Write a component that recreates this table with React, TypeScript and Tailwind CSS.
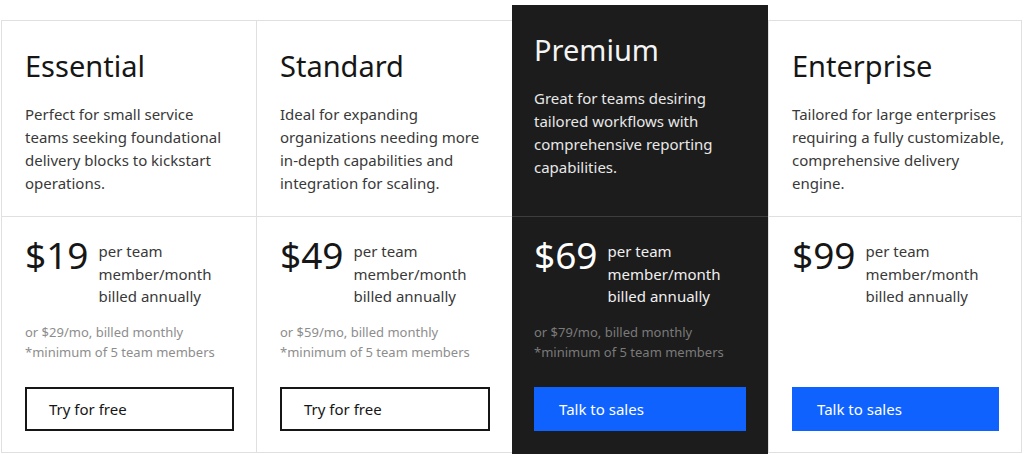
const plans = [
  {
    name: "Essential",
    desc: "Perfect for small service teams seeking foundational delivery blocks to kickstart operations.",
    price: "$19",
    monthly: "or $29/mo, billed monthly",
    cta: "Try for free",
    dark: false,
    width: "w-[255px]",
    descPad: "pr-[20px]",
  },
  {
    name: "Standard",
    desc: "Ideal for expanding organizations needing more in-depth capabilities and integration for scaling.",
    price: "$49",
    monthly: "or $59/mo, billed monthly",
    cta: "Try for free",
    dark: false,
    width: "w-[256px]",
    descPad: "pr-[20px]",
  },
  {
    name: "Premium",
    desc: "Great for teams desiring tailored workflows with comprehensive reporting capabilities.",
    price: "$69",
    monthly: "or $79/mo, billed monthly",
    cta: "Talk to sales",
    dark: true,
    width: "w-[256px]",
    descPad: "pr-[20px]",
  },
  {
    name: "Enterprise",
    desc: "Tailored for large enterprises requiring a fully customizable, comprehensive delivery engine.",
    price: "$99",
    monthly: null,
    cta: "Talk to sales",
    dark: false,
    width: "w-[254px] border-r",
    descPad: "pr-[8px]",
  },
]

function PlanColumn({ plan }: { plan: (typeof plans)[number] }) {
  const dark = plan.dark
  return (
    <div
      className={
        dark
          ? `${plan.width} -mt-[15px] bg-[#1c1c1c] flex flex-col`
          : `${plan.width} border-l border-t border-b border-[#e0e0e0] bg-white flex flex-col`
      }
    >
      <div
        className={
          dark
            ? `h-[212px] border-b border-[#3d3d3d] pl-[22px] ${plan.descPad} pt-[27px]`
            : `h-[196px] border-b border-[#e0e0e0] pl-[23px] ${plan.descPad} pt-[27px]`
        }
      >
        <h2 className={`text-[29px] leading-[36px] ${dark ? "text-[#f4f4f4]" : "text-[#161616]"}`}>{plan.name}</h2>
        <p className={`mt-[19px] text-[15px] leading-[23px] ${dark ? "text-[#e8e8e8]" : "text-[#393939]"}`}>{plan.desc}</p>
      </div>
      <div
        className={`${dark ? "h-[237px] pl-[22px] pb-[23px]" : "h-[235px] pl-[23px] pb-[21px]"} pr-[22px] pt-[19px] flex flex-col`}
      >
        <div className="flex items-start gap-[10px]">
          <span className={`text-[37px] leading-[37px] ${dark ? "text-white" : "text-[#161616]"}`}>{plan.price}</span>
          <span className={`mt-[4px] text-[15px] leading-[22.5px] ${dark ? "text-[#f0f0f0]" : "text-[#393939]"}`}>
            per team
            <br />
            member/month
            <br />
            billed annually
          </span>
        </div>
        {plan.monthly && (
          <div className={`mt-[14px] text-[13px] leading-[20px] ${dark ? "text-[#7a7a7a]" : "text-[#8d8d8d]"}`}>
            <div>{plan.monthly}</div>
            <div>*minimum of 5 team members</div>
          </div>
        )}
        {plan.cta === "Try for free" ? (
          <button className="mt-auto h-[44px] w-full border-2 border-[#161616] bg-white pl-[22px] text-left text-[15px] text-[#161616]">
            {plan.cta}
          </button>
        ) : (
          <button className="mt-auto h-[44px] w-full bg-[#0f62fe] pl-[25px] text-left text-[15px] text-white">
            {plan.cta}
          </button>
        )}
      </div>
    </div>
  )
}

export default function App() {
  return (
    <div className="w-[1024px] h-[454px] overflow-hidden bg-white pt-[20px] pl-[1px]" style={{ fontFamily: '"Noto Sans", sans-serif' }}>
      <div className="flex items-start">
        {plans.map((plan) => (
          <PlanColumn key={plan.name} plan={plan} />
        ))}
      </div>
    </div>
  )
}
